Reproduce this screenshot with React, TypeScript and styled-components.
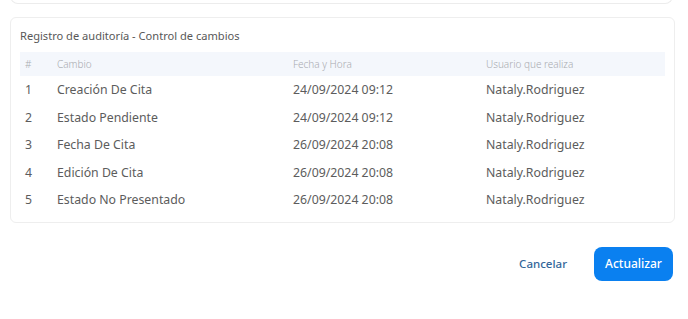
import styled, { createGlobalStyle } from "styled-components";

const GlobalStyle = createGlobalStyle`
  body {
    margin: 0;
    background: #ffffff;
    font-family: "Noto Sans", "Open Sans", sans-serif;
    color: #555;
  }
`;

const Page = styled.div`
  padding: 0 15px 0 10px;
  display: flex;
  flex-direction: column;
`;

const TopCard = styled.div`
  height: 3px;
  margin-top: -8px;
  padding-top: 8px;
  border: 1px solid #ececec;
  border-top: none;
  border-radius: 0 0 8px 8px;
`;

const Card = styled.div`
  margin-top: 13px;
  margin-right: -2px;
  border: 1px solid #eeeeee;
  border-radius: 6px;
  padding: 10px 9px 8px 9px;
`;

const Title = styled.div`
  font-size: 11.1px;
  color: #585858;
  padding: 0 0 9px 0;
`;

const Row = styled.div<{ head?: boolean }>`
  display: grid;
  grid-template-columns: 32px 236px 193px 1fr;
  align-items: center;
  height: ${p => (p.head ? "24px" : "27.5px")};
  background: ${p => (p.head ? "#f4f7fc" : "transparent")};
  font-size: ${p => (p.head ? "10px" : "12.3px")};
  font-weight: ${p => (p.head ? 300 : 400)};
  color: ${p => (p.head ? "#a9abb0" : "#5c5c5c")};
`;

const Cell = styled.div`
  padding-left: 5px;
  white-space: nowrap;
`;

const Footer = styled.div`
  display: flex;
  justify-content: flex-end;
  align-items: center;
  gap: 27px;
  margin-top: 24px;
`;

const TextButton = styled.button`
  border: none;
  background: none;
  padding: 0;
  font-family: inherit;
  font-size: 11.5px;
  font-weight: 500;
  color: #336699;
  cursor: pointer;
`;

const PrimaryButton = styled.button`
  border: none;
  background: #0a80f0;
  color: #fff;
  font-family: inherit;
  font-size: 12px;
  font-weight: 500;
  width: 79px;
  height: 34px;
  border-radius: 8px;
  cursor: pointer;
`;

const rows = [
  ["1", "Creación De Cita", "24/09/2024 09:12", "Nataly.Rodriguez"],
  ["2", "Estado Pendiente", "24/09/2024 09:12", "Nataly.Rodriguez"],
  ["3", "Fecha De Cita", "26/09/2024 20:08", "Nataly.Rodriguez"],
  ["4", "Edición De Cita", "26/09/2024 20:08", "Nataly.Rodriguez"],
  ["5", "Estado No Presentado", "26/09/2024 20:08", "Nataly.Rodriguez"],
];

export default function App() {
  return (
    <>
      <GlobalStyle />
      <Page>
        <TopCard />
        <Card>
          <Title>Registro de auditoría - Control de cambios</Title>
          <Row head>
            <Cell>#</Cell>
            <Cell>Cambio</Cell>
            <Cell>Fecha y Hora</Cell>
            <Cell>Usuario que realiza</Cell>
          </Row>
          {rows.map(r => (
            <Row key={r[0]}>
              {r.map((c, i) => (
                <Cell key={i}>{c}</Cell>
              ))}
            </Row>
          ))}
        </Card>
        <Footer>
          <TextButton>Cancelar</TextButton>
          <PrimaryButton>Actualizar</PrimaryButton>
        </Footer>
      </Page>
    </>
  );
}
